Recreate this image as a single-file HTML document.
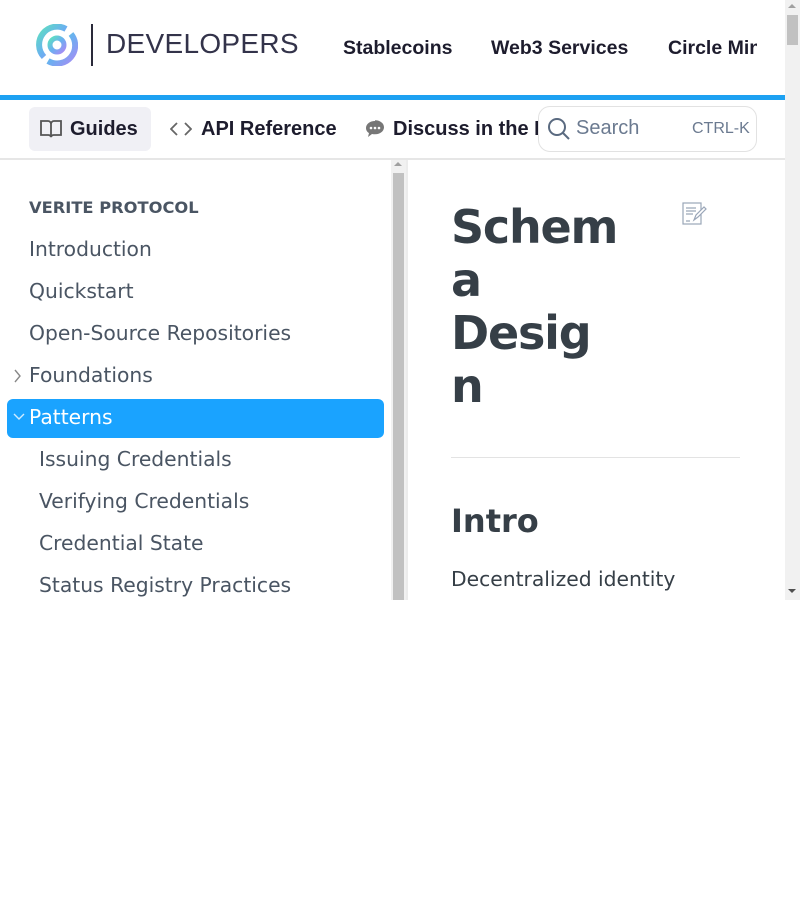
<!DOCTYPE html>
<html><head><meta charset="utf-8"><style>
*{margin:0;padding:0;box-sizing:border-box}
body{width:800px;height:900px;background:#fff;overflow:hidden;font-family:"DejaVu Sans",sans-serif}
#vp{position:relative;width:800px;height:600px;overflow:hidden}
.nav{position:absolute;font:bold 19.5px "Liberation Sans",sans-serif;color:#1d1c2d;top:37px}
.tab{position:absolute;top:107px;height:44px;font:bold 20px "Liberation Sans",sans-serif;color:#1d1c2d;display:flex;align-items:center}
.sb a{position:absolute;left:29px;font-size:20.3px;color:#4a5563;text-decoration:none;white-space:nowrap}
.sb a.sub{left:39px}
</style></head><body><div id="vp">
<svg style="position:absolute;left:36px;top:24px" width="42" height="42" viewBox="0 0 42 42">
<defs><linearGradient id="g" x1="0" y1="0" x2="1" y2="1"><stop offset="0" stop-color="#5ee0c0"/><stop offset=".5" stop-color="#6ab0f0"/><stop offset="1" stop-color="#a78bf5"/></linearGradient></defs>
<path d="M30 5 A18 18 0 0 0 8 33" fill="none" stroke="url(#g)" stroke-width="6"/>
<path d="M12 37 A18 18 0 0 0 35 10" fill="none" stroke="url(#g)" stroke-width="6"/>
<circle cx="21" cy="21" r="7" fill="none" stroke="url(#g)" stroke-width="5"/>
</svg>
<div style="position:absolute;left:91px;top:24px;width:2px;height:42px;background:#2a2a3a"></div>
<div style="position:absolute;left:106px;top:28px;font:28px 'Liberation Sans',sans-serif;color:#33334a;letter-spacing:0.3px">DEVELOPERS</div>
<div class="nav" style="left:343px">Stablecoins</div>
<div class="nav" style="left:491px">Web3 Services</div>
<div class="nav" style="left:668px;width:89px;overflow:hidden;white-space:nowrap">Circle Mint</div>
<div style="position:absolute;left:0;top:95px;width:785px;height:5px;background:#1da1f2"></div>
<div style="position:absolute;left:29px;top:107px;width:122px;height:44px;background:#f0f0f5;border-radius:6px"></div>
<div class="tab" style="left:40px"><svg width="22" height="20" viewBox="0 0 22 20" style="margin-right:8px"><path d="M1 2h7a3 3 0 0 1 3 3v13a3 3 0 0 0-3-2H1zM21 2h-7a3 3 0 0 0-3 3v13a3 3 0 0 1 3-2h7z" fill="none" stroke="#555" stroke-width="1.8"/></svg>Guides</div>
<div class="tab" style="left:170px"><svg width="22" height="16" viewBox="0 0 22 16" style="margin-right:9px"><path d="M7 2L1 8l6 6M15 2l6 6-6 6" fill="none" stroke="#666" stroke-width="1.8"/></svg>API Reference</div>
<div class="tab" style="left:365px;width:173px;overflow:hidden;white-space:nowrap"><svg width="20" height="18" viewBox="0 0 20 18" style="margin-right:8px;flex:none"><path d="M10 1C5 1 1 4 1 8c0 2 1 4 3 5l-1 4 4-3c1 .2 2 .3 3 .3 5 0 9-3 9-7s-4-7-9-7z" fill="#777"/><circle cx="6" cy="8" r="1.3" fill="#fff"/><circle cx="10" cy="8" r="1.3" fill="#fff"/><circle cx="14" cy="8" r="1.3" fill="#fff"/></svg>Discuss in the Forum</div>
<div style="position:absolute;left:538px;top:106px;width:219px;height:46px;border:1px solid #e2e2e2;border-radius:12px;background:#fff"></div>
<svg style="position:absolute;left:547px;top:117px" width="24" height="24" viewBox="0 0 24 24"><circle cx="10" cy="10" r="8" fill="none" stroke="#5a6a80" stroke-width="2"/><path d="M16 16l6 6" stroke="#5a6a80" stroke-width="2"/></svg>
<div style="position:absolute;left:576px;top:117px;font:20px 'Liberation Sans',sans-serif;color:#6b7a90">Search</div>
<div style="position:absolute;left:692px;top:120px;font:16px 'Liberation Sans',sans-serif;color:#6b7a90">CTRL-K</div>
<div style="position:absolute;left:0;top:158px;width:785px;height:2px;background:#e6e6e6"></div>
<div class="sb">
<div style="position:absolute;left:29px;top:198px;font-weight:bold;font-size:16.3px;color:#4a5563">VERITE PROTOCOL</div>
<a style="top:237px">Introduction</a>
<a style="top:279px">Quickstart</a>
<a style="top:321px">Open-Source Repositories</a>
<svg style="position:absolute;left:14px;top:369px" width="8" height="14" viewBox="0 0 8 14"><path d="M1 1l5 6-5 6" fill="none" stroke="#888" stroke-width="1.4"/></svg>
<a style="top:363px">Foundations</a>
<div style="position:absolute;left:7px;top:399px;width:377px;height:39px;background:#1aa3ff;border-radius:6px"></div>
<svg style="position:absolute;left:13px;top:413px" width="12" height="8" viewBox="0 0 12 8"><path d="M1 1l5 5 5-5" fill="none" stroke="#d0ecff" stroke-width="1.4"/></svg>
<a style="top:405px;color:#fff">Patterns</a>
<a class="sub" style="top:447px">Issuing Credentials</a>
<a class="sub" style="top:489px">Verifying Credentials</a>
<a class="sub" style="top:531px">Credential State</a>
<a class="sub" style="top:573px">Status Registry Practices</a>
</div>
<div style="position:absolute;left:391px;top:160px;width:15px;height:440px;background:#f1f1f1"></div>
<div style="position:absolute;left:393px;top:173px;width:11px;height:427px;background:#c1c1c1"></div>
<div style="position:absolute;left:394px;top:162px;width:0;height:0;border:4px solid transparent;border-bottom-color:#a0a0a0;border-top:0"></div>
<div style="position:absolute;left:406px;top:160px;width:2px;height:440px;background:#ececec"></div>
<div style="position:absolute;left:451px;top:201px;font-weight:bold;font-size:46px;letter-spacing:-1.2px;line-height:53px;color:#363f47;white-space:nowrap">Schem<br>a<br>Desig<br>n</div>
<svg style="position:absolute;left:682px;top:202px" width="26" height="24" viewBox="0 0 26 24"><rect x="1" y="1" width="18" height="21" fill="none" stroke="#9aa6b8" stroke-width="1.2"/><path d="M4 6h10M4 9h10M4 12h7M4 19h4" stroke="#9aa6b8" stroke-width="1.2"/><path d="M12 18l2-5 8-8 2 2-8 8z" fill="#fff" stroke="#9aa6b8" stroke-width="1.2"/></svg>
<div style="position:absolute;left:451px;top:457px;width:289px;height:1px;background:#e3e3e3"></div>
<div style="position:absolute;left:451px;top:502px;font-weight:bold;font-size:32px;color:#363f47">Intro</div>
<div style="position:absolute;left:451px;top:567px;font-size:20.3px;color:#363f47;white-space:nowrap">Decentralized identity</div>
<div style="position:absolute;left:785px;top:0;width:15px;height:600px;background:#f1f1f1"></div>
<div style="position:absolute;left:787px;top:15px;width:11px;height:30px;background:#c1c1c1"></div>
<div style="position:absolute;left:788px;top:4px;border:4px solid transparent;border-bottom-color:#a0a0a0;border-top:0"></div>
<div style="position:absolute;left:788px;top:589px;border:4px solid transparent;border-top-color:#505050;border-bottom:0"></div>
</div></body></html>
